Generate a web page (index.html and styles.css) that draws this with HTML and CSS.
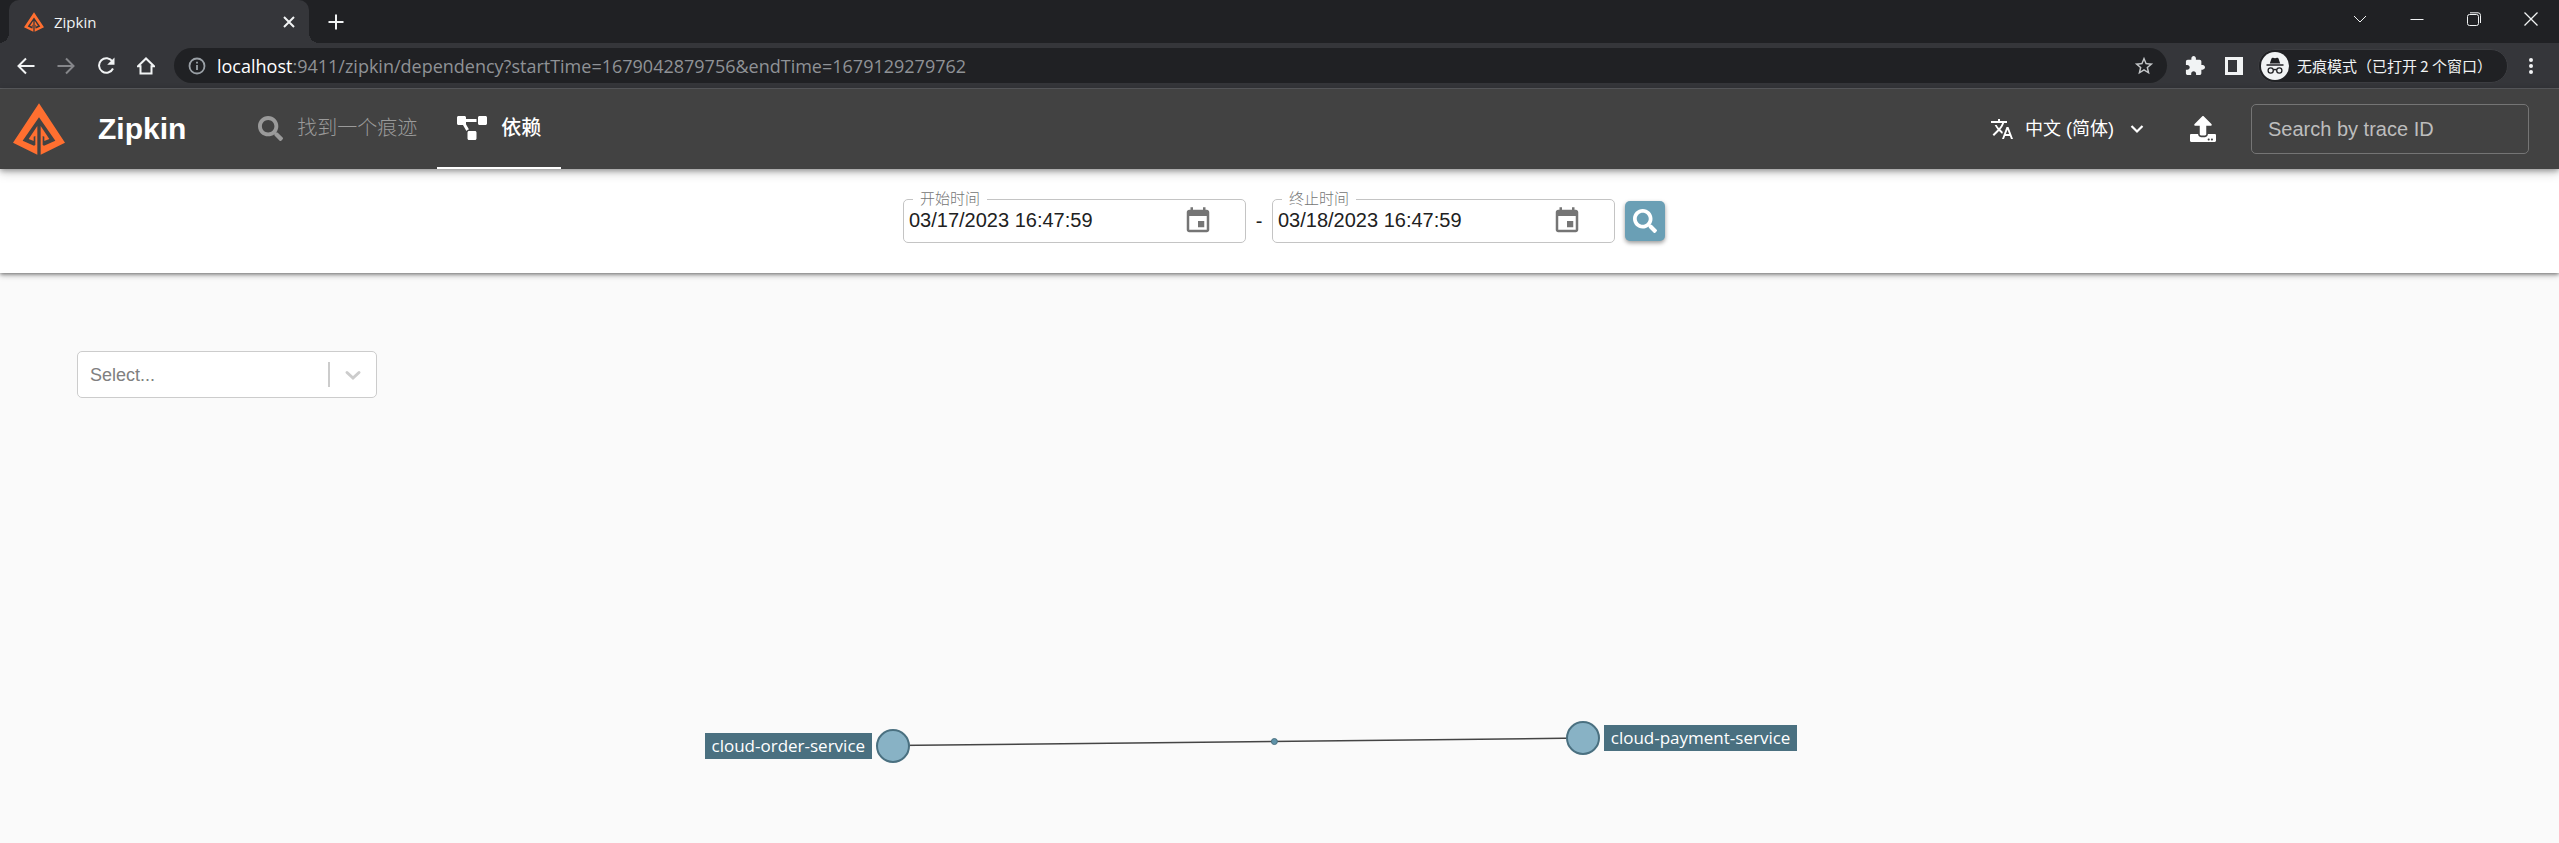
FILE: index.html
```html
<!DOCTYPE html>
<html lang="zh-CN">
<head>
<meta charset="utf-8">
<title>Zipkin</title>
<link rel="stylesheet" href="styles.css">
</head>
<body>
<svg class="defs" aria-hidden="true">
  <symbol id="logo" viewBox="15 16 156 154">
    <path d="M93 16L15 134L88 170V84L62 123L77 129V116L82 114V141L78 143L44 128L93 58Z"/>
    <path d="M93 16L171 134L98 170V84L124 123L109 129V116L104 114V141L108 143L142 128L93 58Z"/>
  </symbol>
  <symbol id="search" viewBox="0 0 512 512"><path d="M505 442.700L405.300 343c-4.500-4.500-10.600-7-17-7H372c27.600-35.300 44-79.700 44-128C416 93.100 322.900 0 208 0S0 93.100 0 208s93.100 208 208 208c48.300 0 92.700-16.400 128-44v16.300c0 6.400 2.500 12.500 7 17l99.700 99.700c9.400 9.400 24.600 9.400 33.900 0l28.300-28.300c9.400-9.400 9.400-24.600.1-34zM208 336c-70.700 0-128-57.200-128-128 0-70.700 57.200-128 128-128 70.700 0 128 57.200 128 128 0 70.700-57.200 128-128 128z"/></symbol>
  <symbol id="calendar" viewBox="0 0 24 24"><path d="M17 12h-5v5h5v-5zM16 1v2H8V1H6v2H5c-1.110 0-1.990.9-1.990 2L3 19c0 1.100.89 2 2 2h14c1.100 0 2-.9 2-2V5c0-1.100-.9-2-2-2h-1V1h-2zm3 18H5V8h14v11z"/></symbol>
</svg>

<div class="tabstrip">
  <div class="tab">
    <svg class="favicon"><use href="#logo"/></svg>
    <span class="tab-title">Zipkin</span>
    <button class="plain" aria-label="Close tab"><svg width="12" height="12" viewBox="0 0 12 12" class="stroke"><path d="M1 1l10 10M11 1L1 11" stroke-width="2"/></svg></button>
  </div>
  <button class="plain new-tab" aria-label="New tab"><svg width="16" height="16" viewBox="0 0 16 16" class="stroke"><path d="M8 0.500v15M0.500 8h15" stroke-width="2"/></svg></button>
  <div class="window-controls">
    <button class="plain" aria-label="Search tabs"><svg width="14" height="14" viewBox="0 0 14 14" class="stroke"><path d="M1 4l6 6 6-6"/></svg></button>
    <button class="plain" aria-label="Minimize"><svg width="14" height="14" viewBox="0 0 14 14" class="stroke"><path d="M0.500 7.500h13"/></svg></button>
    <button class="plain" aria-label="Restore"><svg width="14" height="14" viewBox="0 0 14 14" class="stroke"><rect x="0.500" y="2.500" width="11" height="11" rx="2"/><path d="M3 0.800h8a2.500 2.500 0 0 1 2.500 2.500V11"/></svg></button>
    <button class="plain" aria-label="Close"><svg width="14" height="14" viewBox="0 0 14 14" class="stroke"><path d="M0.500 0.500l13 13M13.500 0.500l-13 13" stroke-width="1.300"/></svg></button>
  </div>
</div>

<div class="toolbar">
  <div class="nav-buttons">
    <button class="plain" aria-label="Back"><svg width="18" height="18" viewBox="0 0 18 18" class="stroke"><path d="M17.500 9H2M9 1.500L1.500 9 9 16.500" stroke-width="2"/></svg></button>
    <button class="plain dim" aria-label="Forward"><svg width="18" height="18" viewBox="0 0 18 18" class="stroke"><path d="M0.500 9H16M9 1.500L16.500 9 9 16.500" stroke-width="2"/></svg></button>
    <button class="plain" aria-label="Reload"><svg width="18" height="18" viewBox="0 0 18 18" class="stroke"><path d="M15.500 4.500A7.300 7.300 0 1 0 16 11.500" stroke-width="2"/><path d="M17.500 0.500v7.300h-7.300z" fill="currentColor" stroke="none"/></svg></button>
    <button class="plain" aria-label="Home"><svg width="18" height="18" viewBox="0 0 18 18" class="stroke"><path d="M1 9.200L9 1.500l8 7.700H14.500V16.500H3.500V9.200z" stroke-width="2"/></svg></button>
  </div>
  <div class="omnibox">
    <svg width="18" height="18" viewBox="0 0 18 18" class="stroke info"><circle cx="9" cy="9" r="7.500" stroke-width="1.800"/><path d="M9 8v5M9 4.800v1.800" stroke-width="1.800"/></svg>
    <div class="url"><span class="host">localhost</span>:9411/zipkin/dependency?startTime=1679042879756&amp;endTime=1679129279762</div>
    <button class="plain star" aria-label="Bookmark"><svg width="22" height="22" viewBox="0 0 24 24" fill="currentColor"><path d="M22 9.240l-7.190-.62L12 2 9.190 8.630 2 9.240l5.460 4.730L5.820 21 12 17.270 18.180 21l-1.630-7.030L22 9.240zM12 15.400l-3.760 2.270 1-4.280-3.320-2.880 4.380-.38L12 6.100l1.710 4.040 4.380.38-3.320 2.880 1 4.280L12 15.400z"/></svg></button>
  </div>
  <button class="plain puzzle" aria-label="Extensions"><svg width="20" height="20" viewBox="1 1 22 22" fill="currentColor"><path d="M20.500 11H19V7c0-1.100-.9-2-2-2h-4V3.500C13 2.120 11.880 1 10.500 1S8 2.120 8 3.500V5H4c-1.100 0-1.990.9-1.990 2v3.800H3.500c1.490 0 2.700 1.210 2.700 2.700s-1.210 2.700-2.700 2.700H2V20c0 1.100.9 2 2 2h3.800v-1.500c0-1.490 1.210-2.700 2.700-2.700 1.490 0 2.700 1.210 2.700 2.700V22H17c1.100 0 2-.9 2-2v-4h1.500c1.380 0 2.500-1.120 2.500-2.500S21.880 11 20.500 11z"/></svg></button>
  <button class="plain panel-button" aria-label="Side panel"><svg width="18" height="18" viewBox="0 0 18 18" fill="currentColor"><path d="M0 0h18v18H0zM3 3v12h9V3z" fill-rule="evenodd"/></svg></button>
  <div class="incognito">
    <svg width="28" height="28" viewBox="0 0 28 28"><circle cx="14" cy="14" r="14" fill="#f1f3f4"/><path d="M8.800 11.500L10.500 6.500Q11 5.500 12 5.800L14 6.300 16 5.800Q17 5.500 17.500 6.500L19.200 11.500zM5.500 12.300h17v1.500h-17z" fill="#202124"/><g fill="none" stroke="#202124" stroke-width="1.300"><circle cx="9.700" cy="18.500" r="2.600"/><circle cx="18.300" cy="18.500" r="2.600"/><path d="M12.300 18q1.700-1 3.400 0"/></g></svg>
    <span>无痕模式（已打开 2 个窗口）</span>
  </div>
  <button class="plain more" aria-label="Menu"><svg width="4" height="18" viewBox="0 0 4 18" fill="currentColor"><circle cx="2" cy="3" r="2"/><circle cx="2" cy="9" r="2"/><circle cx="2" cy="15" r="2"/></svg></button>
</div>

<header class="app-header">
  <svg class="app-logo"><use href="#logo"/></svg>
  <strong class="brand">Zipkin</strong>
  <nav>
    <a href="#find"><svg class="nav-search"><use href="#search"/></svg>找到一个痕迹</a>
    <a href="#dependency" class="active"><svg width="30" height="24" viewBox="0 0 640 512" fill="currentColor"><path d="M384 320H256c-17.670 0-32 14.330-32 32v128c0 17.670 14.330 32 32 32h128c17.670 0 32-14.330 32-32V352c0-17.670-14.330-32-32-32zM192 32c0-17.670-14.330-32-32-32H32C14.330 0 0 14.330 0 32v128c0 17.670 14.330 32 32 32h95.720l73.160 128.040C211.980 300.980 232.400 288 256 288h.28L192 175.510V128h224V64H192V32zM608 0H480c-17.670 0-32 14.330-32 32v128c0 17.670 14.330 32 32 32h128c17.670 0 32-14.330 32-32V32c0-17.670-14.330-32-32-32z"/></svg>依赖</a>
  </nav>
  <button class="plain language">
    <svg width="24" height="24" viewBox="0 0 24 24" fill="currentColor"><path d="M12.870 15.070l-2.540-2.510.03-.03c1.740-1.940 2.980-4.170 3.710-6.530H17V4h-7V2H8v2H1v1.990h11.170C11.500 7.920 10.440 9.750 9 11.350 8.070 10.320 7.300 9.190 6.690 8h-2c.73 1.630 1.730 3.170 2.980 4.560l-5.090 5.020L4 19l5-5 3.110 3.110.76-2.040zM18.500 10h-2L12 22h2l1.120-3h4.750L21 22h2l-4.500-12zm-2.620 7l1.620-4.330L19.120 17h-3.240z"/></svg>
    <span>中文 (简体)</span>
    <svg width="14" height="14" viewBox="0 0 14 14" class="stroke"><path d="M1.500 4L7 9.500 12.500 4" stroke-width="2.200"/></svg>
  </button>
  <button class="plain upload" aria-label="Upload"><svg width="26" height="26" viewBox="0 0 512 512" fill="currentColor"><path d="M296 384h-80c-13.300 0-24-10.700-24-24V192h-87.700c-17.800 0-26.700-21.500-14.100-34.100L242.300 5.700c7.500-7.500 19.800-7.500 27.300 0l152.200 152.200c12.600 12.600 3.700 34.100-14.100 34.100H320v168c0 13.300-10.700 24-24 24zm216-8v112c0 13.300-10.700 24-24 24H24c-13.300 0-24-10.700-24-24V376c0-13.300 10.700-24 24-24h136v8c0 30.900 25.100 56 56 56h80c30.900 0 56-25.100 56-56v-8h136c13.300 0 24 10.700 24 24zm-124 88c0-11-9-20-20-20s-20 9-20 20 9 20 20 20 20-9 20-20zm64 0c0-11-9-20-20-20s-20 9-20 20 9 20 20 20 20-9 20-20z"/></svg></button>
  <input class="trace-id" type="text" placeholder="Search by trace ID" aria-label="Search by trace ID">
</header>

<form class="range">
  <fieldset class="picker">
    <legend><label for="start">开始时间</label></legend>
    <input id="start" type="text" value="03/17/2023 16:47:59">
    <button type="button" class="plain" aria-label="选择开始时间"><svg width="30" height="30"><use href="#calendar"/></svg></button>
  </fieldset>
  <span class="dash">-</span>
  <fieldset class="picker">
    <legend><label for="end">终止时间</label></legend>
    <input id="end" type="text" value="03/18/2023 16:47:59">
    <button type="button" class="plain" aria-label="选择终止时间"><svg width="30" height="30"><use href="#calendar"/></svg></button>
  </fieldset>
  <button type="button" class="run" aria-label="查找"><svg width="24" height="24"><use href="#search"/></svg></button>
</form>

<main class="graph">
  <svg class="edges" aria-hidden="true">
    <line x1="34.900%" y1="82.900%" x2="61.850%" y2="81.600%"/>
    <circle cx="49.800%" cy="82.200%" r="3"/>
  </svg>
  <div class="node order"><span>cloud-order-service</span></div>
  <div class="node payment"><span>cloud-payment-service</span></div>
  <div class="service-select">
    <select aria-label="Service"><option>Select...</option></select>
    <svg width="20" height="20" viewBox="0 0 20 20" class="stroke"><path d="M4 7.500l6 5.500 6-5.500" stroke-width="3" stroke-linecap="round"/></svg>
  </div>
</main>
</body>
</html>
```

FILE: styles.css
```css
* { box-sizing: border-box; }
body {
  margin: 0;
  min-height: 100vh;
  display: flex;
  flex-direction: column;
  background: #fafafa;
  color: #212121;
  font: 20px "Liberation Sans", "Noto Sans CJK SC", sans-serif;
}
svg { display: block; flex: none; }
.defs { position: absolute; width: 0; height: 0; }
.stroke { fill: none; stroke: currentColor; }
.plain {
  display: flex;
  align-items: center;
  justify-content: center;
  padding: 0;
  border: 0;
  background: none;
  color: inherit;
  font: inherit;
}

/* Browser window */
.tabstrip {
  display: flex;
  height: 43px;
  padding-left: 9px;
  background: #202124;
  color: #f1f3f4;
}
.tab {
  position: relative;
  display: flex;
  align-items: center;
  gap: 10px;
  width: 300px;
  padding: 0 14px 0 15px;
  border-radius: 10px 10px 0 0;
  background: #35363a;
}
.tab::before, .tab::after {
  content: "";
  position: absolute;
  bottom: 0;
  width: 10px;
  height: 10px;
}
.tab::before { left: -10px; background: radial-gradient(circle at 0 0, transparent 10px, #35363a 10px); }
.tab::after { right: -10px; background: radial-gradient(circle at 100% 0, transparent 10px, #35363a 10px); }
.favicon { width: 20px; height: 20px; fill: #ff6f30; }
.tab-title { flex: 1; font: 15px/20px "Open Sans", sans-serif; }
.new-tab { width: 36px; margin-left: 9px; }
.window-controls { display: flex; margin-left: auto; height: 38px; }
.window-controls button { width: 57px; }

.toolbar {
  display: flex;
  align-items: center;
  height: 46px;
  padding: 0 24px 0 17px;
  border-bottom: 1px solid #5d5e61;
  background: #35363a;
  color: #f1f3f4;
}
.nav-buttons { display: flex; gap: 22px; }
.dim { color: #85868a; }
.omnibox {
  flex: 1;
  display: flex;
  align-items: center;
  height: 35px;
  margin: 0 18px 0 19px;
  padding: 0 12px 0 14px;
  border-radius: 18px;
  background: #202124;
}
.info { color: #9aa0a6; }
.url {
  flex: 1;
  margin-left: 11px;
  color: #8f9296;
  font: 18px/26px "Open Sans", sans-serif;
}
.host { color: #fff; }
.star { color: #c4c7c9; }
.panel-button { margin-left: 20px; }
.incognito {
  display: flex;
  align-items: center;
  gap: 8px;
  width: 250px;
  height: 34px;
  margin: 0 19px 0 15px;
  padding-left: 2px;
  border: 1px solid #3c3d41;
  border-radius: 17px;
  background: #202124;
  font: 15px/20px "Noto Sans CJK SC", sans-serif;
  white-space: nowrap;
}
.more { width: 8px; }

/* Zipkin header */
.app-header {
  position: relative;
  z-index: 2;
  display: flex;
  align-items: center;
  height: 80px;
  padding: 0 30px 0 13px;
  background: #424242;
  color: #fff;
  box-shadow: 0 2px 5px rgba(0, 0, 0, .3), 0 4px 10px rgba(0, 0, 0, .18);
}
.app-logo { width: 52px; height: 52px; fill: #ff6f30; }
.brand { margin-left: 33px; font-size: 30px; line-height: 36px; }
nav { display: flex; align-self: stretch; margin-left: 52px; }
nav a {
  display: flex;
  align-items: center;
  padding: 0 20px;
  border-bottom: 2px solid transparent;
  color: #9a9a9a;
  font-weight: 300;
  line-height: 28px;
  text-decoration: none;
}
nav a.active { border-color: #fff; color: #fff; font-weight: 500; }
nav svg { margin-right: 14px; }
.nav-search { width: 25px; height: 25px; fill: currentColor; }
.language { margin-left: auto; font-size: 18px; line-height: 26px; }
.language span { margin: 0 16px 0 11px; }
.upload { margin: 0 35px 0 46px; }
.trace-id {
  width: 278px;
  height: 50px;
  padding: 0 16px;
  border: 1px solid #757575;
  border-radius: 5px;
  background: transparent;
  color: #fff;
  font: inherit;
}
.trace-id::placeholder { color: #bdbdbd; opacity: 1; }

/* Time range */
.range {
  position: relative;
  z-index: 1;
  display: flex;
  align-items: flex-start;
  justify-content: center;
  height: 104px;
  padding: 22px 0 0 9px;
  background: #fff;
  box-shadow: 0 1px 4px rgba(0, 0, 0, .5), 0 3px 6px rgba(0, 0, 0, .15);
}
.picker {
  display: flex;
  align-items: center;
  width: 343px;
  height: 52px;
  margin: 0;
  padding: 0 32px 8px 5px;
  border: 1px solid #c4c4c4;
  border-radius: 5px;
}
.picker legend {
  margin-left: 4px;
  padding: 0 7px;
  color: #757575;
  font-size: 15px;
  font-weight: 300;
  line-height: 16px;
}
.picker input {
  flex: 1;
  min-width: 0;
  padding: 0;
  border: 0;
  background: none;
  color: #212121;
  font: inherit;
}
.picker button { color: #757575; fill: currentColor; }
.dash { width: 26px; padding-top: 18px; text-align: center; line-height: 24px; }
.run {
  display: flex;
  align-items: center;
  justify-content: center;
  width: 40px;
  height: 40px;
  margin: 10px 0 0 10px;
  padding: 0;
  border: 0;
  border-radius: 5px;
  background: #6a9fb5;
  fill: #fff;
  box-shadow: 0 2px 4px rgba(0, 0, 0, .4);
}

/* Dependency graph */
.graph { position: relative; flex: 1; padding: 78px 77px; }
.service-select {
  position: relative;
  display: flex;
  align-items: center;
  width: 300px;
  height: 47px;
  border: 1px solid #ccc;
  border-radius: 5px;
  background: #fff;
  color: #ccc;
}
.service-select select {
  flex: 1;
  height: 25px;
  padding: 0 12px;
  border: 0;
  border-right: 2px solid #ccc;
  border-radius: 0;
  appearance: none;
  background: none;
  color: #808080;
  font: 18px/22px "Liberation Sans", sans-serif;
}
.service-select svg { margin: 0 13px; }
.edges { position: absolute; inset: 0; width: 100%; height: 100%; }
.edges line { stroke: #444; stroke-width: 1.500; }
.edges circle { fill: #5f93a9; stroke: #4a7080; }
.node {
  position: absolute;
  width: 34px;
  height: 34px;
  border: 2px solid #4a7080;
  border-radius: 50%;
  background: #88b2c5;
  transform: translate(-50%, -50%);
}
.node span {
  position: absolute;
  top: 2px;
  padding: 0 7px;
  background: #4a7080;
  color: #fff;
  font: 500 17px/26px "Open Sans", sans-serif;
  white-space: nowrap;
}
.order { left: 34.900%; top: 82.900%; }
.order span { right: 36px; }
.payment { left: 61.850%; top: 81.600%; }
.payment span { left: 36px; }
```
